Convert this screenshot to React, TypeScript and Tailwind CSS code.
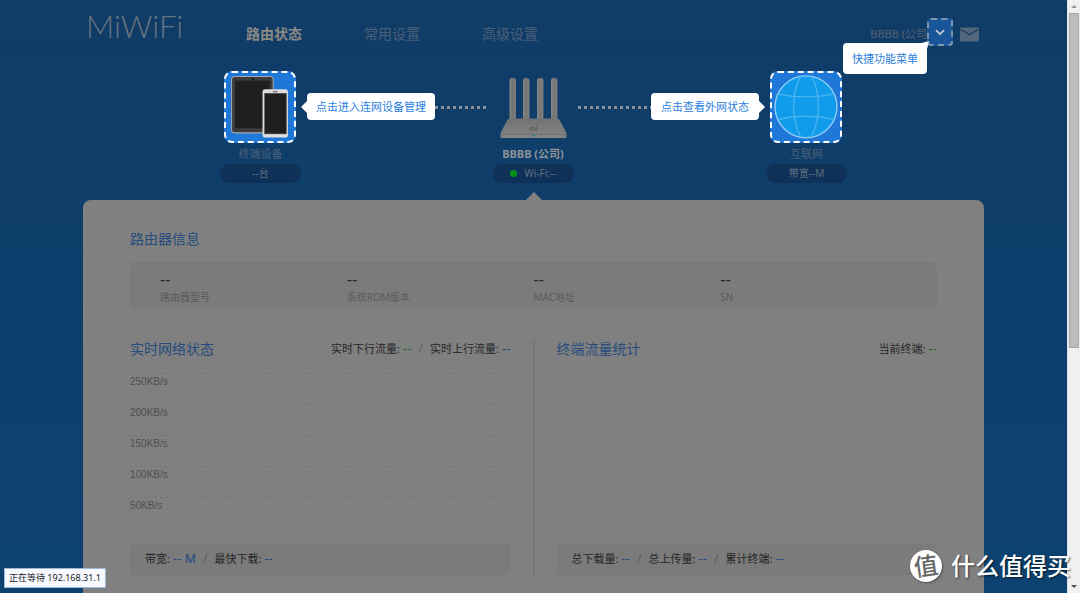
import React from 'react';
import { clsx } from 'clsx';

const navItems = [
  { label: '路由状态', active: true },
  { label: '常用设置', active: false },
  { label: '高级设置', active: false },
];

const routerInfo = ['路由器型号', '系统ROM版本', 'MAC地址', 'SN'];

const speedTicks = ['250KB/s', '200KB/s', '150KB/s', '100KB/s', '50KB/s'];

const DevicesIcon = () => (
  <svg viewBox="0 0 67 67" className="h-full w-full" aria-hidden="true">
    <rect x="5.5" y="3.5" width="41" height="55.5" rx="3" fill="#3c3c3c" stroke="#a3a9b0" />
    <rect x="9" y="7.5" width="34" height="47" fill="#1f1f1f" />
    <circle cx="26.5" cy="5.8" r="1.1" fill="#141414" />
    <rect x="36" y="16" width="25" height="47.5" rx="2.5" fill="#dedede" />
    <rect x="38" y="20" width="21.5" height="40" fill="#1f1f1f" stroke="#555" strokeWidth="0.5" />
    <rect x="46" y="18" width="5" height="1" rx="0.5" fill="#555" />
  </svg>
);

const GlobeIcon = () => (
  <svg viewBox="0 0 67 67" className="h-full w-full" fill="none" aria-hidden="true">
    <circle cx="33.5" cy="33.3" r="30.5" fill="#119ceb" stroke="#8fccf8" strokeWidth="1.4" />
    <g stroke="#4bb3f1" strokeWidth="1.3">
      <path d="M28.3 3.3C19 20 19 46 28.3 63" />
      <path d="M38.8 3.3C48 20 48 46 38.8 63" />
      <path d="M6 20.5C22 24.5 45 24.5 61 20.5" />
      <path d="M6 46C22 41.5 45 41.5 61 46" />
    </g>
  </svg>
);

const RouterIcon = () => (
  <svg viewBox="0 0 81 71" className="h-[71px] w-full" aria-hidden="true">
    <defs>
      <linearGradient id="antenna" x1="0" x2="1" y1="0" y2="0">
        <stop offset="0" stopColor="#858585" />
        <stop offset="0.5" stopColor="#747474" />
        <stop offset="1" stopColor="#828282" />
      </linearGradient>
      <linearGradient id="shell" x1="0" x2="0" y1="0" y2="1">
        <stop offset="0" stopColor="#727272" />
        <stop offset="1" stopColor="#858585" />
      </linearGradient>
    </defs>
    {[16.5, 30, 44, 58].map((x) => (
      <rect key={x} x={x} y="6" width="6.4" height="42" rx="2.5" fill="url(#antenna)" />
    ))}
    <path d="M17 46.5H64Q66 46.5 67 48.5L73.5 61V64.5Q73.5 66 72 66H9Q7.5 66 7.5 64.5V61L14 48.5Q15 46.5 17 46.5Z" fill="url(#shell)" />
    <path d="M7.8 62.3H73.2" stroke="#6c6c6c" strokeWidth="0.8" />
    <rect x="39" y="63" width="3.5" height="1.2" fill="#2b8990" />
    <text x="40.5" y="59" textAnchor="middle" fontSize="7" fontWeight="700" fill="#5b5b5b" fontFamily="Lato, sans-serif">mi</text>
  </svg>
);

const Bubble = ({ children, side }: { children: React.ReactNode; side: 'left' | 'right' }) => (
  <div
    className={clsx(
      'relative shrink-0 rounded bg-white text-[11px] leading-[27px] whitespace-nowrap text-[#2a7fdc]',
      side === 'left' ? 'px-[9px]' : 'px-2.5',
    )}
  >
    {children}
    <span
      className={clsx(
        'absolute top-2 border-y-[6px] border-y-transparent',
        side === 'left' ? '-left-[6px] border-r-[6px] border-r-white' : '-right-[6px] border-l-[6px] border-l-white',
      )}
    />
  </div>
);

const Dots = () => (
  <div className="mt-0.5 h-[3px] flex-1 bg-[repeating-linear-gradient(90deg,#8b9094_0_3px,transparent_3px_6px)]" />
);

const Pill = ({ children }: { children: React.ReactNode }) => (
  <span className="flex h-[19px] w-full items-center justify-center rounded-full bg-[#0f3157] text-[10px] text-[#5f7082]">
    {children}
  </span>
);

const Stat = ({ label, value = '--', tone = 'blue' }: { label: string; value?: string; tone?: 'blue' | 'green' }) => (
  <span>
    {label}:{' '}
    <span
      className={clsx(
        "font-['Liberation_Sans',sans-serif] text-[13px]",
        tone === 'green' ? 'text-[#1f6b28]' : 'text-[#1f4c82]',
      )}
    >
      {value}
    </span>
  </span>
);

const Slash = () => <span className="px-[7px] text-xs text-[#5c5c5c]">/</span>;

const Header = () => (
  <header className="flex h-[68px] items-center pr-[5px] pl-[3px]">
    <a href="#" className="w-[160px] self-start pt-2 font-[Lato,sans-serif] text-[31px] leading-9 font-light text-[#677480]">
      MiWiFi
    </a>
    <nav className="flex flex-1 gap-[62px] text-sm">
      {navItems.map((item) => (
        <a
          key={item.label}
          href="#"
          className={item.active ? 'font-bold text-[#8b8984]' : 'text-[#4b6077]'}
        >
          {item.label}
        </a>
      ))}
    </nav>
    <span className="text-[11px] whitespace-nowrap text-[#546271]">BBBB (公司</span>
    <div className="relative -mt-1">
      <button
        type="button"
        aria-label="快捷功能菜单"
        className="flex h-7 w-[26px] items-center justify-center rounded border-2 border-dashed border-[#7f96b0] bg-[#185699]"
      >
        <svg width="10" height="7" viewBox="0 0 10 7" fill="none" stroke="#b9c6d3" strokeWidth="1.8">
          <path d="M1 1.2L5 5.2L9 1.2" />
        </svg>
      </button>
      <div className="absolute top-[25px] right-[26px] z-10 rounded bg-white px-[9px] text-[11px] leading-[31px] whitespace-nowrap text-[#2a7fdc]">
        快捷功能菜单
        <svg className="absolute -top-[2px] -right-[2px]" width="9" height="8" viewBox="0 0 9 8" aria-hidden="true">
          <path d="M9 0L7 8L0 2.5Z" fill="#fff" />
        </svg>
      </div>
    </div>
    <button type="button" aria-label="消息" className="ml-[7px]">
      <svg width="19" height="15" viewBox="0 0 19 15" aria-hidden="true">
        <rect x="0" y="0.5" width="19" height="14" rx="1" fill="#52667c" />
        <path d="M0.5 2.5L9.5 7.5L18.5 2.5" fill="none" stroke="#103c67" strokeWidth="1.3" />
      </svg>
    </button>
  </header>
);

const Topology = () => (
  <section className="flex px-[137px] pt-[3px] pb-[17px]">
    <div className="flex w-[81px] flex-col">
      <button type="button" aria-label="终端设备" className="mb-px ml-1 size-[72px] rounded-lg border-2 border-dashed border-white bg-[#1f77d8]">
        <DevicesIcon />
      </button>
      <span className="text-center text-[11px] leading-5 text-[#4b6077]">终端设备</span>
      <Pill>--台</Pill>
    </div>
    <div className="flex h-[71px] flex-1 items-center pr-1 pl-[6px]">
      <Bubble side="left">点击进入连网设备管理</Bubble>
      <Dots />
    </div>
    <div className="flex w-[81px] flex-col items-center pt-px">
      <RouterIcon />
      <span className="text-[11px] leading-[21px] font-bold whitespace-nowrap text-[#8c9298]">BBBB (公司)</span>
      <Pill>
        <i className="mr-2 size-[7px] rounded-full bg-[#068f19]" />
        Wi-Fi:--
      </Pill>
    </div>
    <div className="flex h-[71px] flex-1 items-center pr-[7px] pl-1">
      <Dots />
      <Bubble side="right">点击查看外网状态</Bubble>
    </div>
    <div className="flex w-[81px] flex-col">
      <button type="button" aria-label="互联网" className="mb-px ml-1 size-[72px] rounded-lg border-2 border-dashed border-white bg-[#1f77d8]">
        <GlobeIcon />
      </button>
      <span className="text-center text-[11px] leading-5 text-[#4b6077]">互联网</span>
      <Pill>带宽--M</Pill>
    </div>
  </section>
);

const Panel = () => (
  <section className="relative flex-1 rounded-t-lg bg-[#808080] px-[47px] pt-7 text-[#262626]">
    <span className="absolute -top-2 left-1/2 -translate-x-1/2 border-x-8 border-b-8 border-x-transparent border-b-[#808080]" />
    <h2 className="text-sm leading-[22px] text-[#254c7d]">路由器信息</h2>
    <dl className="mt-3 grid grid-cols-4 rounded bg-[#7b7b7b] px-[30px] pt-2.5 pb-0.5">
      {routerInfo.map((label) => (
        <div key={label} className="flex flex-col-reverse">
          <dt className="text-[10px] leading-[18px] text-[#5c5c5c]">{label}</dt>
          <dd className="font-['Liberation_Sans',sans-serif] text-base leading-4">--</dd>
        </div>
      ))}
    </dl>

    <div className="mt-[31px] flex">
      <div className="flex flex-1 flex-col pr-[22px]">
        <div className="flex items-center justify-between leading-5">
          <h2 className="text-sm leading-5 text-[#254c7d]">实时网络状态</h2>
          <p className="text-[11px]">
            <Stat label="实时下行流量" tone="green" />
            <Slash />
            <Stat label="实时上行流量" />
          </p>
        </div>
        <ul className="mt-3.5 font-['Liberation_Sans',sans-serif] text-[10px] text-[#4f4f4f]">
          {speedTicks.map((tick) => (
            <li key={tick} className="h-[31px] border-t border-dashed border-[#777] leading-[15px]">
              {tick}
            </li>
          ))}
        </ul>
        <p className="mt-[15px] rounded bg-[#7b7b7b] px-[15px] text-[11px] leading-8">
          <Stat label="带宽" value="-- M" />
          <Slash />
          <Stat label="最快下载" />
        </p>
      </div>
      <div className="flex flex-1 flex-col justify-between border-l-2 border-[#777] pl-[22px]">
        <div className="flex items-center justify-between leading-5">
          <h2 className="text-sm leading-5 text-[#254c7d]">终端流量统计</h2>
          <p className="text-[11px]">
            <Stat label="当前终端" tone="green" />
          </p>
        </div>
        <p className="rounded bg-[#7b7b7b] px-[15px] text-[11px] leading-8">
          <Stat label="总下载量" />
          <Slash />
          <Stat label="总上传量" />
          <Slash />
          <Stat label="累计终端" />
        </p>
      </div>
    </div>
  </section>
);

const ScrollRail = () => (
  <aside className="flex w-[13px] shrink-0 flex-col items-center border-l border-[#dde3ea] bg-[#f0f0f0]" aria-hidden="true">
    <div className="flex h-[13px] items-center">
      <span className="border-x-[3px] border-b-[3px] border-x-transparent border-b-[#9a9a9a]" />
    </div>
    <div className="w-full flex-1">
      <div className="mx-px h-[59%] border border-[#a8a8a8] bg-[#bcbcbc]" />
    </div>
    <div className="flex h-[13px] items-center">
      <span className="border-x-[3px] border-t-[3px] border-x-transparent border-t-[#505050]" />
    </div>
  </aside>
);

export default function App() {
  return (
    <div className="relative flex h-screen overflow-hidden bg-linear-to-b from-[#103c67] to-[#0c4270] font-['Noto_Sans','Noto_Sans_CJK_SC',sans-serif]">
      <main className="min-w-0 flex-1 overflow-hidden">
        <div className="mx-auto flex h-full max-w-[901px] flex-col">
          <Header />
          <Topology />
          <Panel />
        </div>
      </main>
      <ScrollRail />

      {/* browser loading status */}
      <div className="absolute bottom-[5px] left-1 border border-[#9fb6d6] bg-[#f6f9ff] px-1 text-[9px] leading-[18px] text-[#222]">
        正在等待 192.168.31.1
      </div>

      {/* watermark */}
      <div className="absolute right-[9px] bottom-[9px] flex items-center gap-[9px] font-medium text-white">
        <span className="flex size-8 items-center justify-center rounded-full bg-white shadow-[1px_1px_2px_rgba(0,0,0,0.4)]">
          <span className="-rotate-8 text-2xl leading-8 text-[#666]">值</span>
        </span>
        <span className="text-2xl leading-9 [text-shadow:1px_1px_2px_rgba(0,0,0,0.6)]">什么值得买</span>
      </div>
    </div>
  );
}
